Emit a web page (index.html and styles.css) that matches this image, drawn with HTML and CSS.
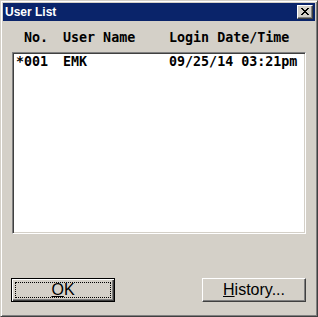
FILE: index.html
```html
<!DOCTYPE html>
<html lang="en">
<head>
    <meta charset="UTF-8">
    <meta name="viewport" content="width=device-width, initial-scale=1.0">
    <title>User List</title>
    <link rel="stylesheet" href="styles.css">
</head>
<body>

    <!-- Dialog window -->
    <div class="window">
        <div class="titlebar">
            <span class="title">User List</span>
            <button class="close-btn" title="Close">
                <svg width="8" height="7" viewBox="0 0 8 7" shape-rendering="crispEdges">
                    <path d="M0 0h2v1h-2z M6 0h2v1h-2z M1 1h2v1h-2z M5 1h2v1h-2z M2 2h4v1h-4z M3 3h2v1h-2z M2 4h4v1h-4z M1 5h2v1h-2z M5 5h2v1h-2z M0 6h2v1h-2z M6 6h2v1h-2z" fill="#000"/>
                </svg>
            </button>
        </div>

        <div class="content">
            <!-- Column headers -->
            <div class="row list-header">
                <span class="c-mark"></span><span class="c-no">No.</span><span class="c-name">User Name</span><span class="c-date">Login Date/Time</span>
            </div>

            <!-- User list -->
            <div class="listbox">
                <div class="row">
                    <span class="c-mark">*</span><span class="c-no">001</span><span class="c-name">EMK</span><span class="c-date">09/25/14 03:21pm</span>
                </div>
            </div>

            <div class="buttons">
                <button class="btn default"><span class="focus"><u>O</u>K</span></button>
                <button class="btn"><span class="focus"><u>H</u>istory...</span></button>
            </div>
        </div>
    </div>

</body>
</html>
```

FILE: styles.css
```css
body {
    margin: 0;
    padding: 0;
    background-color: #d4d0c8;
    font-family: 'Liberation Sans', Arial, sans-serif;
}

/* Window frame */
.window {
    width: 318px;
    height: 317px;
    box-sizing: border-box;
    background-color: #d4d0c8;
    border: 1px solid;
    border-color: #d4d0c8 #404040 #404040 #d4d0c8;
    box-shadow: inset 1px 1px #fff, inset -1px -1px #808080;
    padding: 2px;
    display: flex;
    flex-direction: column;
}

/* Title bar */
.titlebar {
    height: 18px;
    background-color: #0a246a;
    display: flex;
    align-items: center;
    justify-content: space-between;
    padding-left: 2px;
}

.title {
    color: #fff;
    font-weight: bold;
    font-size: 12px;
}

.close-btn {
    width: 16px;
    height: 14px;
    margin-right: 2px;
    padding: 0 0 1px 0;
    box-sizing: border-box;
    background-color: #d4d0c8;
    border: 1px solid;
    border-color: #fff #404040 #404040 #fff;
    box-shadow: inset -1px -1px #808080;
    display: flex;
    align-items: center;
    justify-content: center;
}

.close-btn svg {
    display: block;
}

/* Main area */
.content {
    flex-grow: 1;
    display: flex;
    flex-direction: column;
    padding: 9px 9px 12px 9px;
}

.row {
    display: flex;
    font-family: 'DejaVu Sans Mono', monospace;
    font-weight: bold;
    font-size: 13.33px;
    line-height: 16px;
    white-space: pre;
    color: #000;
}

.c-mark {
    width: 8px;
}

.c-no {
    width: 39px;
}

.c-name {
    width: 106px;
}

.list-header {
    padding-left: 4px;
}

/* List box */
.listbox {
    margin-top: 6px;
    height: 182px;
    box-sizing: border-box;
    background-color: #fff;
    border: 1px solid;
    border-color: #808080 #fff #fff #808080;
    box-shadow: inset 1px 1px #404040, inset -1px -1px #d4d0c8;
    padding: 1px 3px;
}

/* Buttons */
.buttons {
    margin-top: auto;
    display: flex;
    justify-content: space-between;
}

.btn {
    width: 104px;
    height: 24px;
    box-sizing: border-box;
    background-color: #d4d0c8;
    border: 1px solid;
    border-color: #fff #404040 #404040 #fff;
    box-shadow: inset -1px -1px #808080;
    padding: 3px;
    display: flex;
    font-family: 'Liberation Sans', Arial, sans-serif;
    font-size: 16px;
    color: #000;
}

.btn.default {
    margin-left: -1px;
    border-color: #000;
    box-shadow: inset 1px 1px #fff, inset -1px -1px #404040, inset -2px -2px #808080;
}

.focus {
    flex-grow: 1;
    display: flex;
    align-items: center;
    justify-content: center;
    border: 1px dotted transparent;
}

.btn.default .focus {
    border-color: #000;
}
```
